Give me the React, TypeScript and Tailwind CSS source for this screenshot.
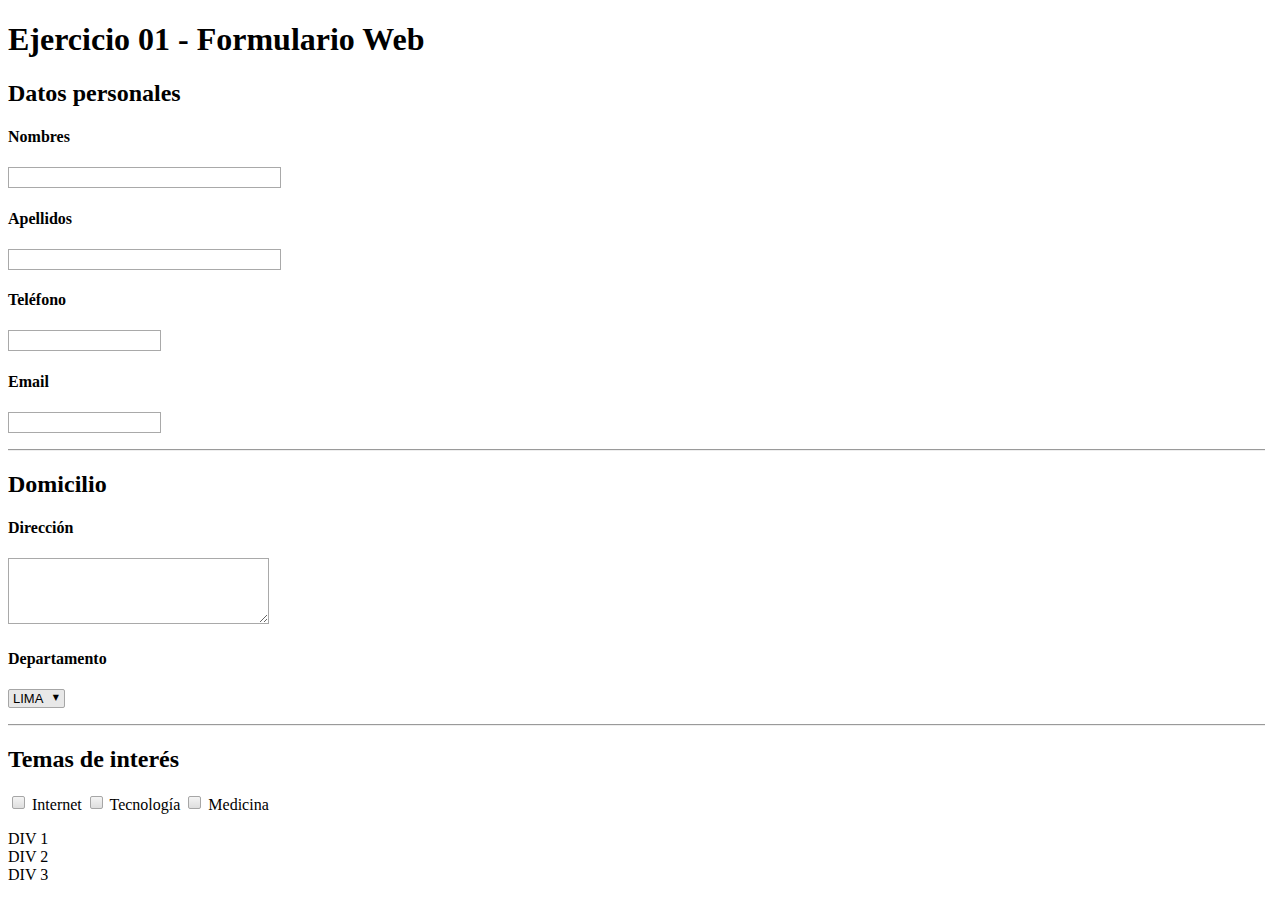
import React from "react";

function Label({ children }: { children: React.ReactNode }) {
  return <h4 className="text-base font-bold my-[21.28px] leading-[normal]">{children}</h4>;
}

function TextInput({ w }: { w: string }) {
  return (
    <div className="leading-[normal]">
      <input
        type="text"
        className={`${w} h-[21px] border border-[#a9a9a9] bg-white px-[2px] text-[13px] outline-none align-bottom`}
      />
    </div>
  );
}

function Check({ label }: { label: string }) {
  return (
    <>
      <input
        type="checkbox"
        className="appearance-none w-[13px] h-[13px] mt-[3px] mr-[3px] mb-[3px] ml-[4px] rounded-[2px] border border-[#a6a6a6] bg-gradient-to-b from-[#f4f4f4] to-[#dedede] align-[-2px]"
      />{" "}
      {label}{" "}
    </>
  );
}

export default function App() {
  return (
    <div className="pl-2 font-['Liberation_Serif','Times_New_Roman',serif] text-black text-base leading-[normal] bg-white min-h-[921px] overflow-hidden">
      <h1 className="text-[32px] font-bold my-[21.44px] leading-[normal]">Ejercicio 01 - Formulario Web</h1>
      <h2 className="text-[24px] font-bold my-[19.92px] leading-[normal]">Datos personales</h2>
      <Label>Nombres</Label>
      <TextInput w="w-[273px]" />
      <Label>Apellidos</Label>
      <TextInput w="w-[273px]" />
      <Label>Teléfono</Label>
      <TextInput w="w-[153px]" />
      <Label>Email</Label>
      <TextInput w="w-[153px]" />
      <hr className="mt-4 mb-2 border-0 border-t border-t-[#9a9a9a] border-b border-b-[#eeeeee] h-0" />
      <h2 className="text-[24px] font-bold my-[19.92px] leading-[normal]">Domicilio</h2>
      <Label>Dirección</Label>
      <div className="leading-[normal] pb-[4px]">
        <textarea className="w-[261px] h-[66px] border border-[#a9a9a9] bg-white align-bottom outline-none" />
      </div>
      <Label>Departamento</Label>
      <div className="leading-[normal]">
        <div className="relative inline-block align-bottom">
          <select className="appearance-none w-[57px] h-[19px] border border-[#a6a6a6] rounded-[2px] bg-[#e8e8e8] pl-[4px] text-[13px] font-['Liberation_Sans',Arial,sans-serif] leading-[17px] outline-none">
            <option>LIMA</option>
          </select>
          <span className="pointer-events-none absolute right-[6px] top-[5px] text-[8px] leading-none font-['DejaVu_Sans',sans-serif]">▼</span>
        </div>
      </div>
      <hr className="mt-4 mb-2 border-0 border-t border-t-[#9a9a9a] border-b border-b-[#eeeeee] h-0" />
      <h2 className="text-[24px] font-bold my-[19.92px] leading-[normal]">Temas de interés</h2>
      <div className="mt-[15px] mb-4 leading-[normal]">
        <Check label="Internet" />
        <Check label="Tecnología" />
        <Check label="Medicina" />
      </div>
      <div>DIV 1</div>
      <div>DIV 2</div>
      <div>DIV 3</div>
    </div>
  );
}
